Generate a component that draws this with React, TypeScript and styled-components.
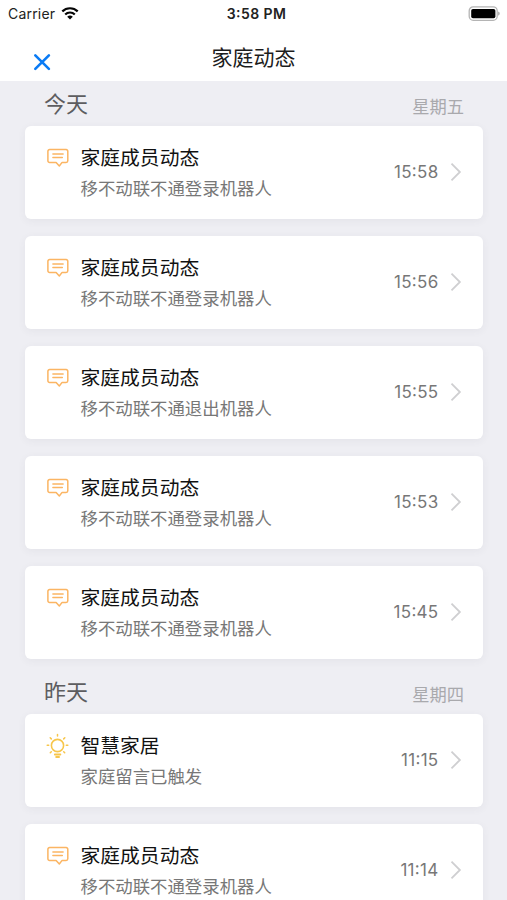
import React from 'react';
import styled, { createGlobalStyle } from 'styled-components';

const GlobalStyle = createGlobalStyle`
  * { box-sizing: border-box; }
  html, body { margin: 0; height: 900px; overflow: hidden; background: #eeeef3; }
  body { font-family: Inter, "Noto Sans CJK SC", sans-serif; }
`;

const Screen = styled.div`
  width: 507px;
  height: 900px;
  overflow: hidden;
  background: #eeeef3;
`;

const StatusBar = styled.header`
  display: grid;
  grid-template-columns: 1fr auto 1fr;
  align-items: center;
  height: 27px;
  padding: 0 7px 0 8px;
  background: #fff;
  color: #222;
  font-size: 14px;
  line-height: 27px;
`;

const Network = styled.div`
  display: flex;
  align-items: center;
  gap: 6px;
  letter-spacing: 0.2px;
`;

const Clock = styled.div`
  padding-left: 5px;
  font-size: 14px;
  font-weight: 600;
  letter-spacing: 0.4px;
  font-feature-settings: "case";
`;

const Power = styled.div`
  display: flex;
  justify-content: flex-end;
`;

const NavBar = styled.nav`
  display: grid;
  grid-template-columns: 1fr auto 1fr;
  height: 53.5px;
  padding: 0 33px;
  background: #fff;
`;

const CloseButton = styled.button`
  justify-self: start;
  display: block;
  width: 18px;
  height: 18px;
  margin-top: 25.5px;
  padding: 0;
  border: 0;
  background: none;
  svg { display: block; }
`;

const PageTitle = styled.h1`
  margin: 0;
  padding-top: 15px;
  color: #1c1c1c;
  font-size: 21px;
  font-weight: 400;
  line-height: 32px;
`;

const Day = styled.section`
  padding: 0 24.5px 10px 25px;
`;

const DayHeader = styled.div`
  display: flex;
  justify-content: space-between;
  height: 45px;
  padding: 0 18.5px 0 19px;
`;

const DayName = styled.h2`
  margin: 0;
  color: #5d5d60;
  font-size: 22px;
  font-weight: 400;
  line-height: 47px;
`;

const Weekday = styled.span`
  color: #a9a9ad;
  font-size: 17.3px;
  line-height: 52px;
`;

const CardList = styled.div`
  display: flex;
  flex-direction: column;
  gap: 17px;
`;

const Card = styled.article`
  display: flex;
  height: 93px;
  padding: 0 21px;
  border-radius: 6px;
  background: #fff;
  box-shadow: 0 2px 8px rgba(60, 60, 80, 0.06);
`;

const CardIcon = styled.div`
  width: 24px;
  margin-right: 10.5px;
  padding-top: 19px;
  svg { display: block; }
`;

const Message = styled.div`
  flex: 1;
  padding-top: 17px;
`;

const MessageTitle = styled.h3`
  margin: 0;
  color: #111;
  font-size: 19.8px;
  font-weight: 400;
  line-height: 30px;
`;

const MessageText = styled.p`
  margin: 2.5px 0 0;
  color: #777;
  font-size: 17.4px;
  line-height: 28px;
`;

const Time = styled.time`
  align-self: center;
  margin-right: 11px;
  color: #777;
  font-size: 17px;
  line-height: 24px;
  letter-spacing: 0.3px;
  font-feature-settings: "case";
`;

const Arrow = styled.svg`
  align-self: center;
  display: block;
`;

const WifiIcon = () => (
  <svg width="18" height="14" viewBox="0 0 18 14" fill="none" stroke="#050505" strokeWidth="2.2">
    <path d="M1.3 4.4a11 11 0 0 1 15.4 0" />
    <path d="M4.2 7.5a6.8 6.8 0 0 1 9.6 0" />
    <path d="M9 12.6 6.2 9.8a4 4 0 0 1 5.6 0Z" fill="#050505" stroke="none" />
  </svg>
);

const BatteryIcon = () => (
  <svg width="32" height="16" viewBox="0 0 32 16">
    <rect x="1.2" y="0.9" width="28" height="13.4" rx="4" fill="#fff" stroke="#b4b4b4" strokeWidth="1.3" />
    <rect x="3.2" y="3" width="24.2" height="9.2" rx="1.8" fill="#000" />
    <path d="M30.4 5.6c1.5.7 1.5 3.4 0 4.1Z" fill="#888" />
  </svg>
);

const MessageIcon = () => (
  <svg width="24" height="26" viewBox="0 0 24 26" fill="none" stroke="#fbb563" strokeWidth="1.5" strokeLinejoin="round" strokeLinecap="round">
    <path d="M3.6 4.6h16.5a1.7 1.7 0 0 1 1.7 1.7v9.4a1.7 1.7 0 0 1-1.7 1.7h-4L13.3 21l-3.2-3.6H3.6a1.7 1.7 0 0 1-1.7-1.7V6.3a1.7 1.7 0 0 1 1.7-1.7Z" />
    <path d="M6.9 8.9h10.2M6.9 12.6h9.4" />
  </svg>
);

const BulbIcon = () => (
  <svg width="24" height="26" viewBox="0 0 24 26" fill="none" stroke="#f7c64b" strokeWidth="1.6" strokeLinecap="round">
    <circle cx="11.5" cy="12.5" r="6.1" />
    <path d="M8.9 21.4h5.4M10.2 23.9h2.8" strokeWidth="2" />
    <path d="M11.5 1.5v1.4M4.2 4.8l1.1 1.1M18.8 4.8l-1.1 1.1M1.2 12.3h1.5M20.3 12.3h1.5M4.3 19.7l1-1M18.7 19.7l-1-1" strokeWidth="1.5" />
  </svg>
);

type Kind = 'member' | 'home';

interface Entry {
  kind: Kind;
  title: string;
  text: string;
  time: string;
}

const member = (text: string, time: string): Entry => ({ kind: 'member', title: '家庭成员动态', text, time });

const days: { name: string; weekday: string; entries: Entry[] }[] = [
  {
    name: '今天',
    weekday: '星期五',
    entries: [
      member('移不动联不通登录机器人', '15:58'),
      member('移不动联不通登录机器人', '15:56'),
      member('移不动联不通退出机器人', '15:55'),
      member('移不动联不通登录机器人', '15:53'),
      member('移不动联不通登录机器人', '15:45'),
    ],
  },
  {
    name: '昨天',
    weekday: '星期四',
    entries: [
      { kind: 'home', title: '智慧家居', text: '家庭留言已触发', time: '11:15' },
      member('移不动联不通登录机器人', '11:14'),
    ],
  },
];

const EntryCard = ({ kind, title, text, time }: Entry) => (
  <Card>
    <CardIcon>{kind === 'member' ? <MessageIcon /> : <BulbIcon />}</CardIcon>
    <Message>
      <MessageTitle>{title}</MessageTitle>
      <MessageText>{text}</MessageText>
    </Message>
    <Time>{time}</Time>
    <Arrow width="12" height="20" viewBox="0 0 12 20" fill="none" stroke="#cfcfd1" strokeWidth="1.8">
      <path d="M1.5 1.6 9.9 10 1.5 18.4" />
    </Arrow>
  </Card>
);

export default function App() {
  return (
    <Screen>
      <GlobalStyle />
      <StatusBar>
        <Network>
          Carrier
          <WifiIcon />
        </Network>
        <Clock>3:58 PM</Clock>
        <Power>
          <BatteryIcon />
        </Power>
      </StatusBar>
      <NavBar>
        <CloseButton aria-label="关闭">
          <svg width="18" height="18" viewBox="0 0 18 18" stroke="#0a7bf5" strokeWidth="2.6" strokeLinecap="round">
            <path d="M2.3 2.3 15.9 15.9M15.9 2.3 2.3 15.9" />
          </svg>
        </CloseButton>
        <PageTitle>家庭动态</PageTitle>
      </NavBar>
      {days.map((day) => (
        <Day key={day.name}>
          <DayHeader>
            <DayName>{day.name}</DayName>
            <Weekday>{day.weekday}</Weekday>
          </DayHeader>
          <CardList>
            {day.entries.map((entry) => (
              <EntryCard key={entry.time} {...entry} />
            ))}
          </CardList>
        </Day>
      ))}
    </Screen>
  );
}
